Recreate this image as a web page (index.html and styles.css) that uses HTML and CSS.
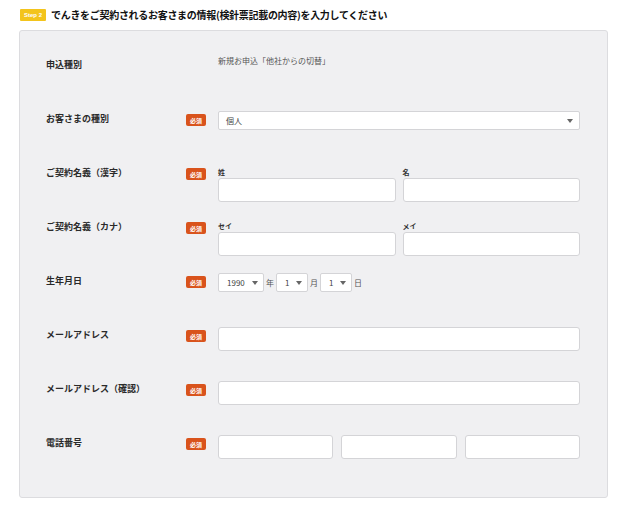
FILE: index.html
```html
<!DOCTYPE html>
<html lang="ja">
<head>
<meta charset="utf-8">
<title>Step 2</title>
<link rel="stylesheet" href="styles.css">
</head>
<body>
<div class="heading">
  <span class="step">Step 2</span>
  <h2 class="title">でんきをご契約されるお客さまの情報(検針票記載の内容)を入力してください</h2>
</div>
<div class="panel">
  <div class="row">
    <div class="label">申込種別</div>
    <div class="noreq"></div>
    <div class="field field-text"><p class="value">新規お申込「他社からの切替」</p></div>
  </div>
  <div class="row">
    <div class="label">お客さまの種別</div>
    <div class="req">必須</div>
    <div class="field">
      <div class="select select-full"><span>個人</span><span class="caret"></span></div>
    </div>
  </div>
  <div class="row">
    <div class="label">ご契約名義（漢字）</div>
    <div class="req">必須</div>
    <div class="field names">
      <div><div class="sub">姓</div><input class="input" type="text"></div>
      <div><div class="sub">名</div><input class="input" type="text"></div>
    </div>
  </div>
  <div class="row">
    <div class="label">ご契約名義（カナ）</div>
    <div class="req">必須</div>
    <div class="field names">
      <div><div class="sub">セイ</div><input class="input" type="text"></div>
      <div><div class="sub">メイ</div><input class="input" type="text"></div>
    </div>
  </div>
  <div class="row">
    <div class="label">生年月日</div>
    <div class="req">必須</div>
    <div class="field date">
      <div class="select select-year"><span>1990</span><span class="caret"></span></div>
      <span class="unit">年</span>
      <div class="select select-small"><span>1</span><span class="caret"></span></div>
      <span class="unit">月</span>
      <div class="select select-small"><span>1</span><span class="caret"></span></div>
      <span class="unit">日</span>
    </div>
  </div>
  <div class="row">
    <div class="label">メールアドレス</div>
    <div class="req">必須</div>
    <div class="field"><input class="input" type="text"></div>
  </div>
  <div class="row">
    <div class="label">メールアドレス（確認）</div>
    <div class="req">必須</div>
    <div class="field"><input class="input" type="text"></div>
  </div>
  <div class="row">
    <div class="label">電話番号</div>
    <div class="req">必須</div>
    <div class="field phone">
      <input class="input" type="text">
      <input class="input" type="text">
      <input class="input" type="text">
    </div>
  </div>
</div>
</body>
</html>
```

FILE: styles.css
```css
* { box-sizing: border-box; }

body {
  margin: 0;
  background: #ffffff;
  font-family: "Noto Sans CJK JP", "Noto Sans", sans-serif;
  color: #222222;
}

.heading {
  display: flex;
  align-items: center;
  gap: 5px;
  height: 29px;
  padding-left: 20px;
}

.step {
  display: flex;
  align-items: center;
  justify-content: center;
  width: 26px;
  height: 12px;
  background: #f3c41c;
  color: #ffffff;
  font-family: "Liberation Sans", sans-serif;
  font-size: 6px;
  font-weight: 700;
  border-radius: 1px;
}

.title {
  margin: 0;
  font-size: 10px;
  font-weight: 700;
  line-height: 14px;
  letter-spacing: -0.3px;
  color: #111111;
}

.panel {
  margin: 1px 0 0 19px;
  width: 589px;
  padding: 23px 27px 11px 26px;
  background: #f0f0f2;
  border: 1px solid #dcdcdf;
  border-radius: 3px;
}

.row {
  display: flex;
  min-height: 54px;
}

.label {
  width: 140px;
  font-size: 9px;
  font-weight: 700;
  line-height: 22px;
  color: #2a2a2a;
}

.req {
  display: flex;
  align-items: center;
  justify-content: center;
  width: 20px;
  height: 12px;
  margin-top: 6px;
  background: #d9531c;
  color: #ffffff;
  font-size: 6px;
  font-weight: 700;
  border-radius: 2px;
}

.noreq { width: 20px; }

.field {
  width: 362px;
  margin-left: 12px;
  padding-top: 3px;
}

.field-text { padding-top: 0; }

.value {
  margin: 0;
  font-size: 8px;
  line-height: 14px;
  color: #555555;
}

.select {
  display: flex;
  align-items: center;
  justify-content: space-between;
  height: 19px;
  padding: 0 5px 0 8px;
  background: #ffffff;
  border: 1px solid #d4d4d7;
  border-radius: 2px;
  font-size: 8px;
  color: #444444;
}

.select-full { padding-left: 7px; padding-right: 6px; }
.select-year { width: 46px; }
.select-small { width: 32px; }

.caret {
  width: 0;
  height: 0;
  border-left: 3px solid transparent;
  border-right: 3px solid transparent;
  border-top: 4px solid #666666;
}

.names {
  display: grid;
  grid-template-columns: 1fr 1fr;
  column-gap: 7px;
  padding-top: 4px;
}

.sub {
  font-size: 7px;
  font-weight: 700;
  line-height: 12px;
  color: #333333;
}

.input {
  display: block;
  width: 100%;
  height: 24px;
  margin: 0;
  padding: 0;
  background: #ffffff;
  border: 1px solid #d4d4d7;
  border-radius: 3px;
}

.date {
  display: flex;
  align-items: center;
  align-self: flex-start;
}

.unit {
  margin: 0 2px 0 2px;
  font-size: 8px;
  color: #555555;
}

.phone {
  display: grid;
  grid-template-columns: 1fr 1fr 1fr;
  column-gap: 8px;
}
```
